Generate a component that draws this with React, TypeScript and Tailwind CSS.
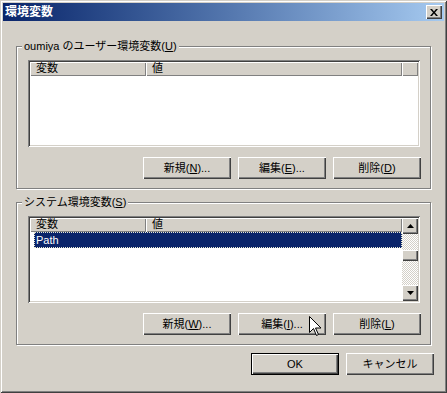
import React, { FC, ReactNode } from 'react';

const raised =
  'bg-[#d4d0c8] shadow-[inset_1px_1px_0_#fff,inset_-1px_-1px_0_#404040,inset_-2px_-2px_0_#808080]';

type ButtonProps = {
  label: string;
  mnemonic?: string;
  dots?: boolean;
  isDefault?: boolean;
};

const Button: FC<ButtonProps> = ({ label, mnemonic, dots, isDefault }) => {
  const text = (
    <span className="text-[11px] leading-none text-black">
      {label}
      {mnemonic ? (
        <>
          (<span className="underline underline-offset-1">{mnemonic}</span>)
        </>
      ) : null}
      {dots ? '...' : null}
    </span>
  );

  if (isDefault) {
    return (
      <div className="w-[88px] h-[22px] border border-black">
        <div className={`${raised} w-full h-full flex items-center justify-center`}>
          {text}
        </div>
      </div>
    );
  }

  return (
    <div className={`${raised} w-[88px] h-[22px] flex items-center justify-center`}>
      {text}
    </div>
  );
};

const HeaderCell: FC<{ className?: string; children?: ReactNode }> = ({
  className = '',
  children,
}) => (
  <div
    className={`h-[14px] shrink-0 bg-[#d4d0c8] shadow-[inset_1px_1px_0_#fff,inset_-1px_-1px_0_#808080] pl-[6px] text-[11px] leading-[13px] text-black ${className}`}
  >
    {children}
  </div>
);

const Arrow: FC<{ down?: boolean }> = ({ down }) => (
  <svg width="7" height="4" viewBox="0 0 7 4">
    {down ? (
      <path d="M0 0h7L3.5 4z" fill="#000" />
    ) : (
      <path d="M0 4h7L3.5 0z" fill="#000" />
    )}
  </svg>
);

const ScrollBar: FC = () => (
  <div className="w-[16px] h-full flex flex-col shrink-0">
    <div className={`${raised} w-[16px] h-[16px] flex items-center justify-center shrink-0`}>
      <Arrow />
    </div>
    <div className="flex-1 flex flex-col bg-[repeating-conic-gradient(#fff_0_25%,#d4d0c8_0_50%)] bg-[length:2px_2px]">
      <div className="h-[16px]" />
      <div className={`${raised} w-[16px] h-[11px]`} />
    </div>
    <div className={`${raised} w-[16px] h-[16px] flex items-center justify-center shrink-0`}>
      <Arrow down />
    </div>
  </div>
);

type GroupProps = {
  title: ReactNode;
  list: ReactNode;
  buttons: ReactNode;
  className?: string;
};

const Group: FC<GroupProps> = ({ title, list, buttons, className = '' }) => (
  <div
    className={`relative w-[415px] h-[143px] border border-[#808080] shadow-[1px_1px_0_#fff,inset_1px_1px_0_#fff] pt-[13px] pl-[11px] pr-[10px] ${className}`}
  >
    <div className="absolute left-[5px] top-[-8px] bg-[#d4d0c8] px-[2px] text-[11px] leading-[14px] text-black">
      {title}
    </div>
    {list}
    <div className="flex justify-end gap-[7px] mt-[10px] -mr-px">{buttons}</div>
  </div>
);

const UserList: FC = () => (
  <div className="w-[392px] h-[87px] p-[2px] bg-white shadow-[inset_1px_1px_0_#808080,inset_-1px_-1px_0_#fff,inset_2px_2px_0_#404040,inset_-2px_-2px_0_#d4d0c8]">
    <div className="flex">
      <HeaderCell className="w-[116px]">変数</HeaderCell>
      <HeaderCell className="w-[256px]">値</HeaderCell>
      <HeaderCell className="w-[16px]" />
    </div>
  </div>
);

const SystemList: FC = () => (
  <div className="w-[392px] h-[87px] p-[2px] bg-white flex shadow-[inset_1px_1px_0_#808080,inset_-1px_-1px_0_#fff,inset_2px_2px_0_#404040,inset_-2px_-2px_0_#d4d0c8]">
    <div className="w-[372px] flex flex-col">
      <div className="flex">
        <HeaderCell className="w-[116px]">変数</HeaderCell>
        <HeaderCell className="w-[256px]">値</HeaderCell>
      </div>
      <div className="ml-[4px] h-[16px] bg-[#0a246a] border border-dotted border-[#e8e8d0] pl-[1px] text-[11px] leading-[14px] text-white">
        Path
      </div>
    </div>
    <ScrollBar />
  </div>
);

export default function App() {
  return (
    <div className="relative w-[447px] h-[393px] bg-[#d4d0c8] p-[3px] flex flex-col font-['Liberation_Sans','Noto_Sans_CJK_JP',sans-serif] shadow-[inset_1px_1px_0_#d4d0c8,inset_-1px_-1px_0_#404040,inset_2px_2px_0_#fff,inset_-2px_-2px_0_#808080]">
      <div className="h-[18px] shrink-0 flex items-center justify-between bg-linear-to-r from-[#0a246a] to-[#a6caf0] pl-[2px] pr-[2px]">
        <span className="text-white font-bold text-[12px] leading-none">環境変数</span>
        <div className={`${raised} w-[16px] h-[14px] flex items-center justify-center`}>
          <svg width="8" height="7" viewBox="0 0 8 7">
            <path d="M0 0h2l2 2.5L6 0h2L5 3.5 8 7H6L4 4.5 2 7H0l3-3.5z" fill="#000" />
          </svg>
        </div>
      </div>

      <div className="flex flex-col pl-[13px]">
        <Group
          className="mt-[25px]"
          title={
            <>
              oumiya のユーザー環境変数(<span className="underline underline-offset-1">U</span>)
            </>
          }
          list={<UserList />}
          buttons={
            <>
              <Button label="新規" mnemonic="N" dots />
              <Button label="編集" mnemonic="E" dots />
              <Button label="削除" mnemonic="D" />
            </>
          }
        />
        <Group
          className="mt-[13px]"
          title={
            <>
              システム環境変数(<span className="underline underline-offset-1">S</span>)
            </>
          }
          list={<SystemList />}
          buttons={
            <>
              <Button label="新規" mnemonic="W" dots />
              <Button label="編集" mnemonic="I" dots />
              <Button label="削除" mnemonic="L" />
            </>
          }
        />
        <div className="flex justify-end gap-[7px] mt-[8px] pr-[10px]">
          <Button label="OK" isDefault />
          <Button label="キャンセル" />
        </div>
      </div>

      <svg
        className="absolute left-[309px] top-[316px]"
        width="13"
        height="21"
        viewBox="0 0 13 21"
      >
        <path
          d="M0.5 0.5v16l4-4 3 7 2-1-3-6.5h5.5z"
          fill="#fff"
          stroke="#000"
          strokeWidth="1"
          strokeLinejoin="miter"
        />
      </svg>
    </div>
  );
}
